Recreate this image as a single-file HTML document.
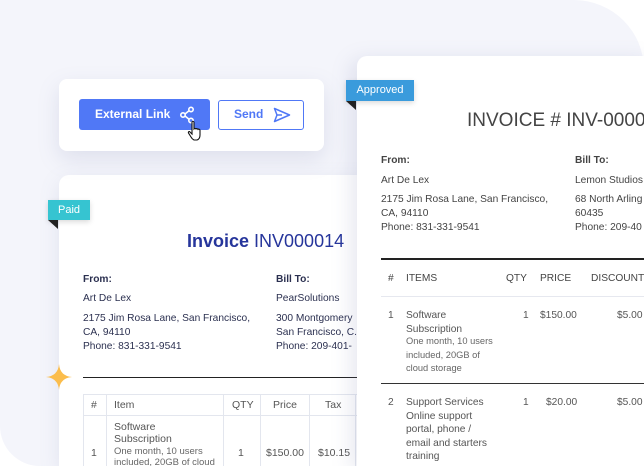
<!DOCTYPE html>
<html><head><style>
*{margin:0;padding:0;box-sizing:border-box}
html,body{width:644px;height:466px;overflow:hidden}
body{background:#fff;font-family:"Liberation Sans",sans-serif;position:relative}
.bg{position:absolute;left:0;top:0;width:644px;height:466px;background:#f4f5fb;border-top-right-radius:70px;border-bottom-left-radius:40px}
.abs{position:absolute}
.card{position:absolute;background:#fff;border-radius:8px;box-shadow:0 6px 20px rgba(120,130,170,.15)}
.t{position:absolute;white-space:nowrap}
.s{font-size:10.2px;color:#2b3050;line-height:14px}
.r{font-size:10.2px;color:#555;line-height:14px}
</style></head><body>
<div class="bg"></div>

<!-- left invoice -->
<div class="card" style="left:59px;top:175px;width:320px;height:291px;border-radius:10px 10px 0 0"></div>
<div class="t" style="left:187px;top:231px;font-size:18px;color:#26359b"><b>Invoice</b> INV000014</div>
<div class="t s" style="left:83px;top:273px;font-weight:bold">From:</div>
<div class="t s" style="left:276px;top:273px;font-weight:bold">Bill To:</div>
<div class="t s" style="left:83px;top:292px">Art De Lex</div>
<div class="t s" style="left:276px;top:292px">PearSolutions</div>
<div class="t s" style="left:83px;top:312px">2175 Jim Rosa Lane, San Francisco,<br>CA, 94110<br>Phone: 831-331-9541</div>
<div class="t s" style="left:276px;top:312px">300 Montgomery<br>San Francisco, C.<br>Phone: 209-401-</div>
<div class="abs" style="left:83px;top:377px;width:280px;height:1px;background:#222"></div>
<div class="abs" style="left:83px;top:394px;width:280px;height:80px;border:1px solid #e3e6ee"></div>
<div class="abs" style="left:83px;top:415px;width:280px;height:1px;background:#e3e6ee"></div>
<div class="abs" style="left:106px;top:394px;width:1px;height:80px;background:#e3e6ee"></div>
<div class="abs" style="left:223px;top:394px;width:1px;height:80px;background:#e3e6ee"></div>
<div class="abs" style="left:260px;top:394px;width:1px;height:80px;background:#e3e6ee"></div>
<div class="abs" style="left:309px;top:394px;width:1px;height:80px;background:#e3e6ee"></div>
<div class="abs" style="left:355px;top:394px;width:1px;height:80px;background:#e3e6ee"></div>
<div class="t r" style="left:91px;top:398px;font-size:10.5px">#</div>
<div class="t r" style="left:114px;top:398px;font-size:10.5px">Item</div>
<div class="t r" style="left:232px;top:398px;font-size:10.5px">QTY</div>
<div class="t r" style="left:273px;top:398px;font-size:10.5px">Price</div>
<div class="t r" style="left:325px;top:398px;font-size:10.5px">Tax</div>
<div class="t r" style="left:114px;top:421px;line-height:12px;font-size:10.5px">Software<br>Subscription</div>
<div class="t" style="left:114px;top:446px;font-size:9.5px;color:#666;line-height:11px">One month, 10 users<br>included, 20GB of cloud</div>
<div class="t r" style="left:91px;top:446px;font-size:10.5px">1</div>
<div class="t r" style="left:238px;top:446px;font-size:10.5px">1</div>
<div class="t r" style="left:266px;top:446px;font-size:10.5px">$150.00</div>
<div class="t r" style="left:318px;top:446px;font-size:10.5px">$10.15</div>
<div class="abs" style="left:48px;top:200px;width:42px;height:20px;background:#36c4d1;color:#fff;font-size:11px;line-height:20px;text-align:center;box-shadow:0 2px 5px rgba(0,0,0,.15)">Paid</div>
<div class="abs" style="left:48px;top:220px;width:0;height:0;border-top:9px solid #222;border-left:10px solid transparent"></div>

<!-- star -->
<svg class="abs" style="left:45px;top:363px" width="28" height="28" viewBox="0 0 28 28"><path d="M14 1 Q15 13 27 14 Q15 15 14 27 Q13 15 1 14 Q13 13 14 1Z" fill="#fbbd4c"/></svg>

<!-- top buttons card -->
<div class="card" style="left:59px;top:79px;width:265px;height:72px;box-shadow:0 8px 22px rgba(120,130,170,.18)"></div>
<div class="abs" style="left:79px;top:99px;width:131px;height:31px;background:#5078f6;border-radius:3px"></div>
<div class="t" style="left:95px;top:107px;font-size:12px;color:#fff;font-weight:bold">External Link</div>
<svg class="abs" style="left:179px;top:106px" width="16" height="18" viewBox="0 0 16 18"><g fill="none" stroke="#fff" stroke-width="1.6"><circle cx="12" cy="3.5" r="2.2"/><circle cx="4" cy="9" r="2.2"/><circle cx="12" cy="14.5" r="2.2"/><path d="M6 8 10 4.8M6 10 10 13.2"/></g></svg>
<svg class="abs" style="left:187px;top:120px" width="18" height="22" viewBox="0 0 18 22"><path d="M5 2 Q6 0.5 7 2 V9 Q8 8 9 9 Q10 8 11 9.5 Q12 8.5 13 10 V15 Q13 19 10 20 H7 Q5 19 4 17 L1.5 13 Q1 11.5 2.5 11.5 L5 14Z" fill="#fff" stroke="#111" stroke-width="1.1"/></svg>
<div class="abs" style="left:218px;top:100px;width:86px;height:30px;border:1px solid #5078f6;border-radius:3px;background:#fff"></div>
<div class="t" style="left:234px;top:107px;font-size:12px;color:#5078f6;font-weight:bold">Send</div>
<svg class="abs" style="left:273px;top:107px" width="18" height="16" viewBox="0 0 18 16"><path d="M1.5 1.5 16.5 8 1.5 14.5 4 8Z M4 8H9" fill="none" stroke="#5078f6" stroke-width="1.5" stroke-linejoin="round"/></svg>

<!-- right invoice -->
<div class="card" style="left:357px;top:56px;width:300px;height:410px;border-radius:10px 10px 0 0;box-shadow:-6px 4px 20px rgba(120,130,170,.18)"></div>
<div class="t" style="left:467px;top:110px;font-size:19px;color:#444">INVOICE # INV-0000</div>
<div class="t r" style="left:381px;top:154px;font-weight:bold;color:#444">From:</div>
<div class="t r" style="left:575px;top:154px;font-weight:bold;color:#444">Bill To:</div>
<div class="t r" style="left:381px;top:174px;color:#444">Art De Lex</div>
<div class="t r" style="left:575px;top:174px;color:#444">Lemon Studios</div>
<div class="t r" style="left:381px;top:193px;color:#444">2175 Jim Rosa Lane, San Francisco,<br>CA, 94110<br>Phone: 831-331-9541</div>
<div class="t r" style="left:575px;top:193px;color:#444">68 North Arling<br>60435<br>Phone: 209-40</div>
<div class="abs" style="left:381px;top:258px;width:263px;height:2px;background:#222"></div>
<div class="t r" style="left:388px;top:272px;color:#444">#</div>
<div class="t r" style="left:406px;top:272px;color:#444">ITEMS</div>
<div class="t r" style="left:506px;top:272px;color:#444">QTY</div>
<div class="t r" style="left:540px;top:272px;color:#444">PRICE</div>
<div class="t r" style="left:591px;top:272px;color:#444">DISCOUNT</div>
<div class="abs" style="left:381px;top:296px;width:263px;height:1px;background:#e6e8ef"></div>
<div class="t r" style="left:388px;top:309px">1</div>
<div class="t r" style="left:406px;top:309px;line-height:13.5px">Software<br>Subscription</div>
<div class="t" style="left:406px;top:335px;font-size:9.3px;color:#666;line-height:13.5px">One month, 10 users<br>included, 20GB of<br>cloud storage</div>
<div class="t r" style="left:523px;top:309px">1</div>
<div class="t r" style="left:540px;top:309px">$150.00</div>
<div class="t r" style="left:617px;top:309px">$5.00</div>
<div class="abs" style="left:381px;top:383px;width:263px;height:1px;background:#333"></div>
<div class="t r" style="left:388px;top:396px">2</div>
<div class="t r" style="left:406px;top:396px;line-height:13.5px">Support Services<br>Online support<br>portal, phone /<br>email and starters<br>training</div>
<div class="t r" style="left:523px;top:396px">1</div>
<div class="t r" style="left:546px;top:396px">$20.00</div>
<div class="t r" style="left:617px;top:396px">$5.00</div>
<div class="abs" style="left:346px;top:80px;width:68px;height:21px;background:#3a9bdc;color:#fff;font-size:11px;line-height:21px;text-align:center;box-shadow:0 2px 5px rgba(0,0,0,.15)">Approved</div>
<div class="abs" style="left:346px;top:101px;width:0;height:0;border-top:9px solid #222;border-left:10px solid transparent"></div>
</body></html>
